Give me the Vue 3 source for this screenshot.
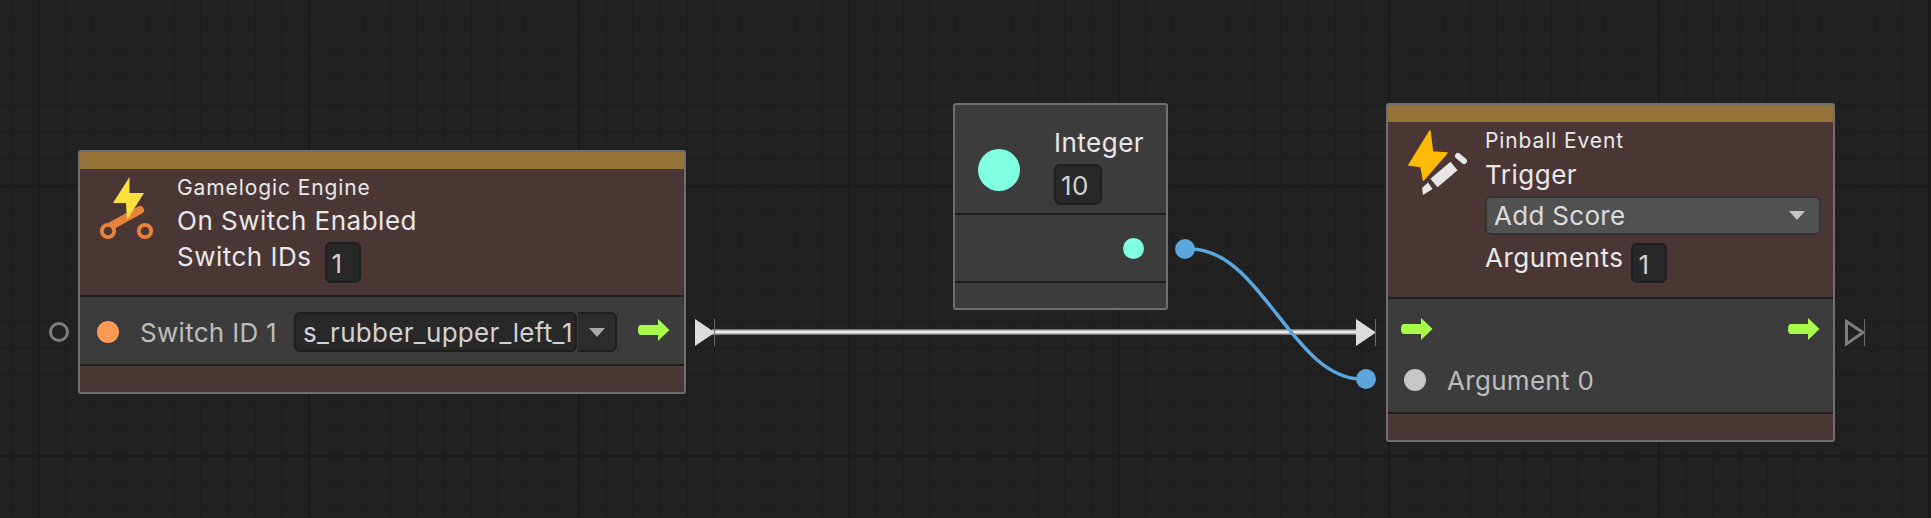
<template>
  <div class="canvas">
    <svg class="wires" width="1931" height="518" viewBox="0 0 1931 518">
      <!-- flow wire -->
      <line x1="712" y1="332" x2="1360" y2="332" stroke="#7c7c7c" stroke-width="6" />
      <line x1="712" y1="332" x2="1360" y2="332" stroke="#ececec" stroke-width="3" />
      <!-- value wire -->
      <path d="M1190 249 C1262 249 1292 379 1362 379" fill="none" stroke="#5ba6dc" stroke-width="3.500" />
      <circle cx="1185" cy="249" r="10" fill="#5ba6dc" />
      <circle cx="1366" cy="379" r="10" fill="#5ba6dc" />
      <!-- outer ports -->
      <circle cx="59" cy="332" r="8.500" fill="none" stroke="#7d7d7d" stroke-width="3" />
      <path d="M695 319 L715 332.500 L695 346 Z" fill="#dcdcdc" />
      <line x1="714.500" y1="319" x2="714.500" y2="346" stroke="#6a6a6a" />
      <path d="M1356 319 L1376 332.500 L1356 346 Z" fill="#dcdcdc" />
      <line x1="1375.500" y1="319" x2="1375.500" y2="346" stroke="#6a6a6a" />
      <path d="M1846.500 321.500 L1863 332.500 L1846.500 344 Z" fill="none" stroke="#7d7d7d" stroke-width="3" />
      <line x1="1864.500" y1="319" x2="1864.500" y2="346" stroke="#6a6a6a" />
    </svg>

    <div class="node switch-node">
      <div class="bar"></div>
      <div class="head">
        <svg class="icon" width="90" height="90" viewBox="0 0 90 90">
          <line x1="26" y1="61" x2="55" y2="45" stroke="#e8833a" stroke-width="8" stroke-linecap="round" />
          <circle cx="23" cy="66" r="6.200" fill="#4b3636" stroke="#e8833a" stroke-width="3.800" />
          <circle cx="60" cy="66" r="6.200" fill="#4b3636" stroke="#e8833a" stroke-width="3.800" />
          <path d="M44.500 12 L28 38 L41 38 L42 55 L59 28 L44.500 28 Z" fill="#fde03d" />
        </svg>
        <div class="fields">
          <div class="title">Gamelogic Engine</div>
          <div class="line">On Switch Enabled</div>
          <div class="line with-input"><span>Switch IDs</span><span class="num">1</span></div>
        </div>
      </div>
      <div class="row first">
        <span class="dot orange"></span>
        <span class="label">Switch ID 1</span>
        <span class="select">s_rubber_upper_left_1</span>
        <span class="picker"><i class="caret dim"></i></span>
        <svg class="arrow" width="32" height="24" viewBox="0 0 32 24"><path d="M3 7 H20 V1 L31.500 12 L20 23 V17 H3 Q0 17 0 12 Q0 7 3 7 Z" fill="#a9fb4b" /></svg>
      </div>
      <div class="foot"></div>
    </div>

    <div class="node int-node">
      <div class="int-head">
        <span class="big-dot"></span>
        <div class="int-fields">
          <div class="line">Integer</div>
          <span class="num wide">10</span>
        </div>
      </div>
      <div class="int-row"><span class="dot mint"></span></div>
      <div class="int-foot"></div>
    </div>

    <div class="node event-node">
      <div class="bar"></div>
      <div class="head">
        <svg class="icon" width="90" height="90" viewBox="0 0 90 90">
          <path d="M35 11 L14 45 L26 46.500 L28.500 60 L52 33 L37.500 32 Z" fill="#fdbb05" stroke="#fdbb05" stroke-width="1.500" stroke-linejoin="round" />
          <line x1="39" y1="63" x2="59" y2="46" stroke="#e6e6e6" stroke-width="11" />
          <line x1="63" y1="36" x2="69" y2="41" stroke="#e6e6e6" stroke-width="6" stroke-linecap="round" />
          <path d="M27 68 L33 62.500 L37.500 69 L28 75 Z" fill="#e6e6e6" />
        </svg>
        <div class="fields event-fields">
          <div class="title">Pinball Event</div>
          <div class="line">Trigger</div>
          <div class="dropdown">Add Score<i class="caret"></i></div>
          <div class="line with-input"><span>Arguments</span><span class="num">1</span></div>
        </div>
      </div>
      <div class="row event-row">
        <svg class="arrow" width="32" height="24" viewBox="0 0 32 24"><path d="M3 7 H20 V1 L31.500 12 L20 23 V17 H3 Q0 17 0 12 Q0 7 3 7 Z" fill="#a9fb4b" /></svg>
        <svg class="arrow" width="32" height="24" viewBox="0 0 32 24"><path d="M3 7 H20 V1 L31.500 12 L20 23 V17 H3 Q0 17 0 12 Q0 7 3 7 Z" fill="#a9fb4b" /></svg>
      </div>
      <div class="row arg-row">
        <span class="dot grey"></span>
        <span class="label">Argument 0</span>
      </div>
      <div class="foot"></div>
    </div>
  </div>
</template>

<script setup>
</script>

<style>
html, body { margin: 0; background: #212121; }
</style>

<style scoped>
.canvas {
  position: relative;
  width: 1931px;
  height: 518px;
  overflow: hidden;
  background-color: #212121;
  background-image:
    linear-gradient(90deg, #1b1b1b 2px, transparent 2px),
    linear-gradient(#1b1b1b 2px, transparent 2px),
    linear-gradient(90deg, #1e1e1e 2px, transparent 2px),
    linear-gradient(#1e1e1e 2px, transparent 2px);
  background-size: 270px 270px, 270px 270px, 27px 27px, 27px 27px;
  background-position: 38px 185px, 38px 185px, 11px 23px, 11px 23px;
  font-family: Inter, "Liberation Sans", sans-serif;
  color: #e8e8e8;
}
.wires { position: absolute; left: 0; top: 0; }

.node {
  position: absolute;
  box-sizing: border-box;
  border: 2px solid #6f6f6f;
  border-radius: 3px;
  display: flex;
  flex-direction: column;
  background: #3c3c3c;
}
.switch-node { left: 78px; top: 150px; width: 608px; height: 244px; }
.int-node { left: 953px; top: 103px; width: 215px; height: 207px; }
.event-node { left: 1386px; top: 103px; width: 449px; height: 339px; }

.bar { height: 17px; background: #957339; flex: none; }
.head { flex: 1; background: #4b3636; display: flex; position: relative; }
.icon { position: absolute; }
.switch-node .icon { left: 5px; top: -4px; }
.event-node .icon { left: 7px; top: -2px; }

.fields { margin-left: 97px; padding-top: 6px; display: flex; flex-direction: column; }
.title { font-size: 21px; line-height: 26px; letter-spacing: 0.900px; }
.line { font-size: 26px; line-height: 30px; letter-spacing: 0.500px; white-space: nowrap; }
.switch-node .line { margin-top: 5px; }
.switch-node .with-input { margin-top: 6px; }
.with-input { display: flex; align-items: flex-start; gap: 13px; }
.num {
  box-sizing: border-box;
  display: block;
  width: 36px;
  height: 41px;
  padding: 5px 0 0 5px;
  background: #282828;
  border: 2px solid #1f1f1f;
  border-radius: 6px;
  font-size: 26px;
  line-height: 30px;
  letter-spacing: 0.300px;
  color: #d2d2d2;
}
.num.wide { width: 48px; }

.event-node .line { margin-top: 6px; }
.event-node .fields { padding-top: 6px; }
.dropdown {
  box-sizing: border-box;
  width: 336px;
  height: 39px;
  margin-top: 6px;
  padding: 0 14px 0 7px;
  display: flex;
  align-items: center;
  justify-content: space-between;
  background: #515151;
  border: 2px solid #333;
  border-radius: 6px;
  font-size: 26px;
  letter-spacing: 0.300px;
  color: #dcdcdc;
}
.event-node .with-input { margin-top: 8px; gap: 8px; }
.event-node .num { height: 40px; }

.caret {
  display: block;
  border-left: 8px solid transparent;
  border-right: 8px solid transparent;
  border-top: 9px solid #c4c4c4;
}
.caret.dim { border-top-color: #a8a8a8; }

.row {
  flex: none;
  display: flex;
  align-items: center;
  box-sizing: border-box;
  background: #3c3c3c;
  border-top: 2px solid #1d1d1d;
  color: #bdbdbd;
  font-size: 26px;
  letter-spacing: 0.300px;
}
.first { height: 69px; padding: 3px 0 0 17px; }
.label { white-space: nowrap; width: 140px; flex: none; }
.first .label { margin-left: 21px; margin-right: 14px; }
.select {
  box-sizing: border-box;
  flex: none;
  width: 283px;
  height: 40px;
  padding-left: 7px;
  display: flex;
  align-items: center;
  background: #282828;
  border: 2px solid #1f1f1f;
  border-radius: 6px;
  color: #d2d2d2;
  white-space: nowrap;
}
.picker {
  box-sizing: border-box;
  flex: none;
  width: 39px;
  height: 40px;
  margin-left: 1px;
  display: flex;
  align-items: center;
  justify-content: center;
  background: #2c2c2c;
  border: 2px solid #1f1f1f;
  border-left: 0;
  border-radius: 0 6px 6px 0;
}
.arrow { flex: none; }
.first .arrow { margin-left: 21px; margin-top: -5px; }

.event-row { height: 62px; padding: 0 13px 1px; justify-content: space-between; }
.arg-row { height: 53px; padding: 0 0 11px 16px; border-top: 0; }
.arg-row .label { margin-left: 21px; width: auto; }

.foot {
  flex: none;
  height: 28px;
  background: #4b3636;
  border-top: 2px solid #1d1d1d;
  box-sizing: border-box;
}

.dot { flex: none; width: 22px; height: 22px; border-radius: 50%; display: block; }
.orange { background: #ff9a55; }
.grey { background: #c6c6c6; }
.mint { background: #7fffe0; width: 21px; height: 21px; }

.int-head {
  flex: none;
  height: 110px;
  box-sizing: border-box;
  display: flex;
  align-items: center;
  padding-left: 23px;
  border-bottom: 2px solid #1d1d1d;
}
.big-dot { flex: none; width: 42px; height: 42px; border-radius: 50%; background: #7fffe0; margin-top: 21px; }
.int-fields { align-self: flex-start; margin-left: 34px; padding-top: 23px; display: flex; flex-direction: column; gap: 6px; }
.int-row {
  flex: none;
  height: 68px;
  box-sizing: border-box;
  display: flex;
  align-items: center;
  justify-content: flex-end;
  padding-right: 22px;
  border-bottom: 2px solid #1d1d1d;
}
.int-foot { flex: 1; }
</style>
